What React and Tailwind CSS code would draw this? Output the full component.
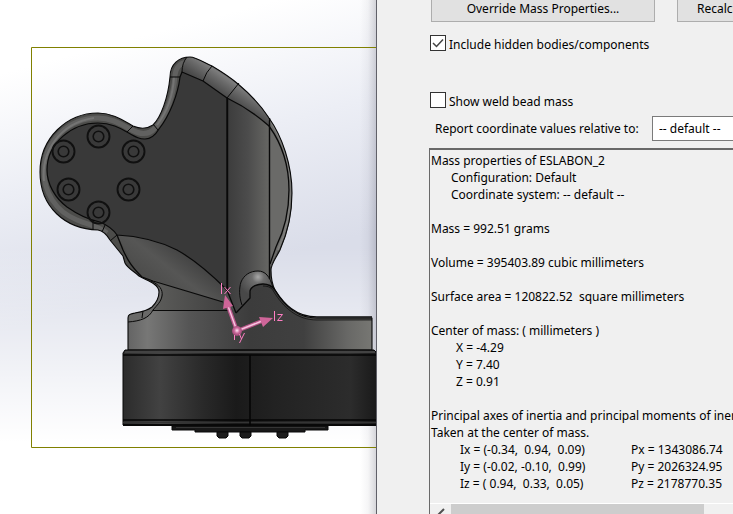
import React from "react";

const bolts = [
  [98, 136],
  [63, 151],
  [133, 151],
  [68, 189],
  [128, 189],
  [98, 212],
];

const silhouette =
  "M98 113C113 113 124 121 133 126C140 129 147 129 153 125C161 117 168 98 170 77C170 64 179 57 190 57C196 57 205 63 212 66C222 72 230 77 238 84C250 94 260 104 269 118C282 136 292 165 292 193C292 216 288 232 280 250C276 258 271 264 271 270C271 278 272 284 275 290C283 304 296 318 317 318H372V350H128V318C128 314 131 314 135 313C141 312 147 311 152 307C156 303 159 298 159 292C159 288 157 286 154 284C150 281 144 279 139 276C134 271 128 269 125 263L123 256L110 240C107 235 104 231 98 230C65 229 40 207 40 172C40 138 67 113 98 113Z";

const face =
  "M182 72L203 81L227 98V290C213 276 195 260 177 250C155 239 136 236 117 235C113 229 107 225 100 222C89 220 77 214 67 207C55 198 47 184 47 170C47 143 72 123 98 123C111 123 120 128 127 132C137 138 140 139 145 139C151 139 156 134 159 129C170 115 178 94 180 77Z";

function Model() {
  return (
    <svg
      className="block h-[514px] w-[376px] shrink-0"
      viewBox="0 0 376 514"
      role="img"
      aria-label="ESLABON_2 model with principal axes"
    >
      <defs>
        <linearGradient id="column" x1="227" x2="269" y1="0" y2="0" gradientUnits="userSpaceOnUse">
          <stop offset="0" stopColor="#3c3c3c" />
          <stop offset="0.5" stopColor="#4c4c4c" />
          <stop offset="1" stopColor="#666663" />
        </linearGradient>
        <linearGradient id="base" x1="128" x2="372" y1="0" y2="0" gradientUnits="userSpaceOnUse">
          <stop offset="0" stopColor="#646464" />
          <stop offset="0.08" stopColor="#777776" />
          <stop offset="0.25" stopColor="#555" />
          <stop offset="0.5" stopColor="#3c3c3c" />
          <stop offset="0.72" stopColor="#404040" />
          <stop offset="0.9" stopColor="#686866" />
          <stop offset="1" stopColor="#777773" />
        </linearGradient>
        <linearGradient id="motor" x1="122" x2="376" y1="0" y2="0" gradientUnits="userSpaceOnUse">
          <stop offset="0" stopColor="#2b2b2b" />
          <stop offset="0.15" stopColor="#424242" />
          <stop offset="0.32" stopColor="#292929" />
          <stop offset="0.45" stopColor="#1a1a1a" />
          <stop offset="0.6" stopColor="#222" />
          <stop offset="0.9" stopColor="#2c2c2c" />
          <stop offset="1" stopColor="#1a1a1a" />
        </linearGradient>
        <linearGradient id="crest" x1="215" y1="96" x2="235" y2="66" gradientUnits="userSpaceOnUse">
          <stop offset="0.1" stopColor="#464646" />
          <stop offset="0.45" stopColor="#6a6a6a" />
          <stop offset="0.6" stopColor="#7c7c7c" />
          <stop offset="0.8" stopColor="#545454" />
        </linearGradient>
        <linearGradient id="web" x1="145" y1="285" x2="180" y2="240" gradientUnits="userSpaceOnUse">
          <stop offset="0" stopColor="#4a4a49" />
          <stop offset="0.5" stopColor="#565655" />
          <stop offset="1" stopColor="#3d3d3d" />
        </linearGradient>
        <linearGradient id="neck" x1="155" x2="240" y1="0" y2="0" gradientUnits="userSpaceOnUse">
          <stop offset="0" stopColor="#5c5c5a" />
          <stop offset="1" stopColor="#3a3a3a" />
        </linearGradient>
        <radialGradient id="hump" cx="258" cy="277" r="20" gradientUnits="userSpaceOnUse">
          <stop offset="0" stopColor="#a8a8a8" />
          <stop offset="0.3" stopColor="#6e6e6e" />
          <stop offset="1" stopColor="#484848" />
        </radialGradient>
        <radialGradient id="ball" cx="0.5" cy="0.45" r="0.6">
          <stop offset="0" stopColor="#ffe4f2" />
          <stop offset="0.45" stopColor="#c9689a" />
          <stop offset="1" stopColor="#8b3f67" />
        </radialGradient>
        <clipPath id="body">
          <path d={silhouette} />
        </clipPath>
      </defs>

      <path d="M376 47.500H31.500V447.500H376" fill="none" stroke="#808000" />

      {/* rounded rim and its soft highlight */}
      <path d={silhouette} fill="#4c4c4a" />
      <g clipPath="url(#body)">
        <path
          d="M107 233C97 225 88 225 77 220C55 211 44 192 44 171C44 141 69 118 98 118C112 118 122 125 130 129C140 135 149 135 155 128C166 116 174 95 175 75C176 67 180 63 187 62"
          fill="none"
          stroke="#616160"
          strokeWidth="5"
        />
        <path
          d="M44 181C41 153 59 123 94 118M157 125C167 112 173 96 174 77"
          fill="none"
          stroke="#808080"
          strokeWidth="2"
          opacity="0.6"
        />
        <path d="M182 72L187 56L212 64L240 84L271 118L269 126L227 98L203 81Z" fill="url(#crest)" />
        <path d="M227 98Q250 109 269 126V278L273 288L237 313L227 290Z" fill="url(#column)" />
        <path d="M269 118C284 140 292 165 292 195C292 225 279 248 269 270Z" fill="#6a6a68" />
        <path
          d="M269 119C284 141 290 165 290 194C290 216 286 232 278 250"
          fill="none"
          stroke="#7c7c7a"
          strokeWidth="2"
        />
        <path d="M117 235C136 236 155 239 177 250C195 260 213 276 227 290L236 313L223 302L153 282L138 273Z" fill="url(#web)" />
        <path d="M150 279L223 302L237 313H150L163 295Z" fill="url(#neck)" />
        <path d="M128 310H237L250 298V290C252 285 258 284 263 284C269 284 272 286 275 290C283 304 296 320 317 320H372V350H128Z" fill="url(#base)" />
        <path d="M242 305C239 297 239 288 241 282C244 275 250 271 258 271C265 271 270 275 273 288C267 283 257 283 253 286C249 290 250 293 250 298Z" fill="url(#hump)" />
        <path d="M128 322V310L150 300L158 284L162 290C163 297 159 303 153 310C149 318 143 321 128 322Z" fill="#696968" />
      </g>
      <path d={face} fill="#393939" />

      {/* model edges */}
      <g fill="none" stroke="#090909" strokeLinejoin="round">
        <path d={silhouette} strokeWidth="1.100" />
        <path d={face} strokeWidth="1.200" />
        <path d="M227 98Q250 109 269 126C282 144 289 166 289 190C289 214 283 233 276 247L270 264" strokeWidth="1.300" />
        <path d="M227.500 98V291M269.500 118V279" strokeWidth="1.400" />
        <path d="M182 72Q182 63 187 57M170 77H180M203 81Q206 72 212 66M227 98L239 83" />
        <path d="M127 132L133 126M153 124L158 130M93 220V230M105 225L102 232M117 235L110 241" />
        <path d="M117 235L123 250C128 261 132 267 142 277L153 281L223 302M227 290L236 313" strokeWidth="1.300" />
        <path d="M151 281C160 285 163 290 162 296C161 302 157 305 153 310C149 318 141 321 128 322M143 311L142 318M153 310.500H229" />
        <path d="M242 305C239 297 239 288 241 282C244 275 250 271 258 271C265 271 270 276 273 288" />
        <path d="M236 313L250 298V291C251 286 258 284 263 284C269 284 272 286 275 290C284 304 296 317 317 317H372" strokeWidth="1.300" />
        <path d="M263 286C269 286 272 288 274 292C283 307 297 320 317 320H372" strokeWidth="0.700" />
      </g>
      <g fill="none" stroke="#101010">
        {bolts.map(([x, y]) => (
          <g key={`${x}-${y}`}>
            <circle cx={x + 0.5} cy={y + 0.5} r="11" strokeWidth="1.900" />
            <circle cx={x + 0.5} cy={y + 0.5} r="5.300" strokeWidth="1.600" />
          </g>
        ))}
      </g>

      {/* motor flange, bolts and housing */}
      <path d="M125 350H374L377 353V425H123V353Z" fill="url(#motor)" stroke="#080808" />
      <path d="M125 352H375" stroke="#434343" strokeWidth="2" />
      <path d="M123 355H376M123 420H376" stroke="#050505" strokeWidth="1.500" />
      <path d="M123 422.500H376" stroke="#343434" />
      <path d="M123 425H376" stroke="#080808" strokeWidth="2" />
      <path d="M250 355V428" stroke="#050505" strokeWidth="1.600" />
      <path d="M172 426H328V430H305V432H195V430H172Z" fill="#181818" stroke="#080808" />
      <path d="M176 427.500H325" stroke="#353535" />
      <path d="M217 432H228V436L226 438H219L217 436ZM240 432H251V436L249 438H242L240 436ZM277 432H288V436L286 438H279L277 436Z" fill="#1d1d1d" stroke="#080808" />

      {/* principal axes triad */}
      <path d="M237 331L228 306M237 331L262 321" stroke="#b9578a" strokeWidth="4" />
      <path d="M237 331L228 306M237 331L262 321" stroke="#f7c3df" strokeWidth="1.500" />
      <path d="M225 295L223 309L233 306ZM273 318L259 317L263 327Z" fill="#cf6599" />
      <circle cx="237" cy="331" r="5" fill="url(#ball)" />
      <g fill="none" stroke="#ff7fc4" strokeWidth="1">
        <path d="M221.500 283V294M224.500 287L230.500 294M230.500 287L224.500 294" />
        <path d="M274.500 311V321M277.500 314.500H282.500L277.500 320.500H282.500" />
        <path d="M234.500 335V340M239.500 334L241.500 339M244.500 333L239.500 343" />
      </g>
    </svg>
  );
}

function CheckOption({ label, defaultChecked }) {
  return (
    <label className="flex h-4 items-center gap-[3px]">
      <span className="grid size-4 shrink-0">
        <input
          type="checkbox"
          defaultChecked={defaultChecked}
          className="peer col-start-1 row-start-1 m-0 size-4 appearance-none border border-[#333] bg-white"
        />
        <svg
          className="pointer-events-none invisible col-start-1 row-start-1 size-4 peer-checked:visible"
          viewBox="0 0 16 16"
          fill="none"
          stroke="#444"
          strokeWidth="1.500"
        >
          <path d="M3 8L6.500 11.500L13 4.500" />
        </svg>
      </span>
      <span className="whitespace-nowrap pt-0.5">{label}</span>
    </label>
  );
}

const inertia = [
  ["Ix = (-0.34,  0.94,  0.09)", "Px = 1343086.74"],
  ["Iy = (-0.02, -0.10,  0.99)", "Py = 2026324.95"],
  ["Iz = ( 0.94,  0.33,  0.05)", "Pz = 2178770.35"],
];

export default function App() {
  return (
    <main className="flex h-screen overflow-hidden bg-white font-['Noto_Sans',sans-serif] text-[12px] leading-[17px] text-black">
      <section className="flex min-w-0 flex-1 overflow-hidden bg-[linear-gradient(to_right,transparent_calc(100%-16px),rgba(70,70,90,0.05)_calc(100%-8px),rgba(70,70,90,0.22)),linear-gradient(to_bottom,transparent_48%,white_86%),linear-gradient(165deg,white_12%,#eceef5_32%,#dadde9_54%)]">
        <Model />
      </section>

      <section
        aria-label="Mass Properties"
        className="flex w-[357px] shrink-0 flex-col overflow-hidden border-l border-[#606068] bg-[#f0f0f0] pl-[52px]"
      >
        <div className="flex shrink-0 gap-[22px] pl-0.5">
          <button className="h-[22px] w-[224px] shrink-0 border border-t-0 border-[#adadad] bg-[#e1e1e1] pb-1">
            Override Mass Properties...
          </button>
          <button className="h-[22px] w-[120px] shrink-0 border border-t-0 border-[#adadad] bg-[#e1e1e1] pb-1 pl-[19px] text-left">
            Recalculate
          </button>
        </div>

        <div className="flex shrink-0 flex-col gap-[41px] pl-px pt-[13px]">
          <CheckOption label="Include hidden bodies/components" defaultChecked />
          <CheckOption label="Show weld bead mass" />
        </div>

        <div className="flex shrink-0 items-center gap-1 pl-1.5 pt-2">
          <label htmlFor="relative" className="w-[213px] shrink-0 whitespace-nowrap">
            Report coordinate values relative to:
          </label>
          <select
            id="relative"
            className="h-[25px] w-[180px] shrink-0 appearance-none border border-[#7a7a7a] bg-white pl-1.5"
          >
            <option>-- default --</option>
          </select>
        </div>

        <div className="mt-[7px] flex min-h-0 flex-1 flex-col overflow-hidden border-l border-t-2 border-[#696969]">
          <div className="flex-1 whitespace-pre pl-px pt-0.5">
            <p>Mass properties of ESLABON_2</p>
            <p className="pl-5">Configuration: Default</p>
            <p className="pl-5">Coordinate system: -- default --</p>
            <p className="pt-[17px]">Mass = 992.51 grams</p>
            <p className="pt-[17px]">Volume = 395403.89 cubic millimeters</p>
            <p className="pt-[17px]">Surface area = 120822.52  square millimeters</p>
            <p className="pt-[17px]">Center of mass: ( millimeters )</p>
            <div className="pl-[25px]">
              <p>X = -4.29</p>
              <p>Y = 7.40</p>
              <p>Z = 0.91</p>
            </div>
            <p className="pt-[17px]">Principal axes of inertia and principal moments of inertia: ( grams *  square millimeters )</p>
            <p>Taken at the center of mass.</p>
            <table className="ml-[29px] border-collapse">
              <tbody>
                {inertia.map(([axis, moment]) => (
                  <tr key={axis}>
                    <td className="w-[171px] p-0">{axis}</td>
                    <td className="p-0">{moment}</td>
                  </tr>
                ))}
              </tbody>
            </table>
          </div>
          <div className="flex h-[11px] shrink-0 border-t border-white">
            <button aria-label="Scroll left" className="flex w-[21px] items-start justify-center pt-1">
              <svg className="h-3 w-2 shrink-0" viewBox="0 0 8 12" fill="none" stroke="#505050" strokeWidth="2">
                <path d="M7 1L2 6L7 11" />
              </svg>
            </button>
            <div className="w-[253px] bg-[#cdcdcd]" />
          </div>
        </div>
      </section>
    </main>
  );
}
